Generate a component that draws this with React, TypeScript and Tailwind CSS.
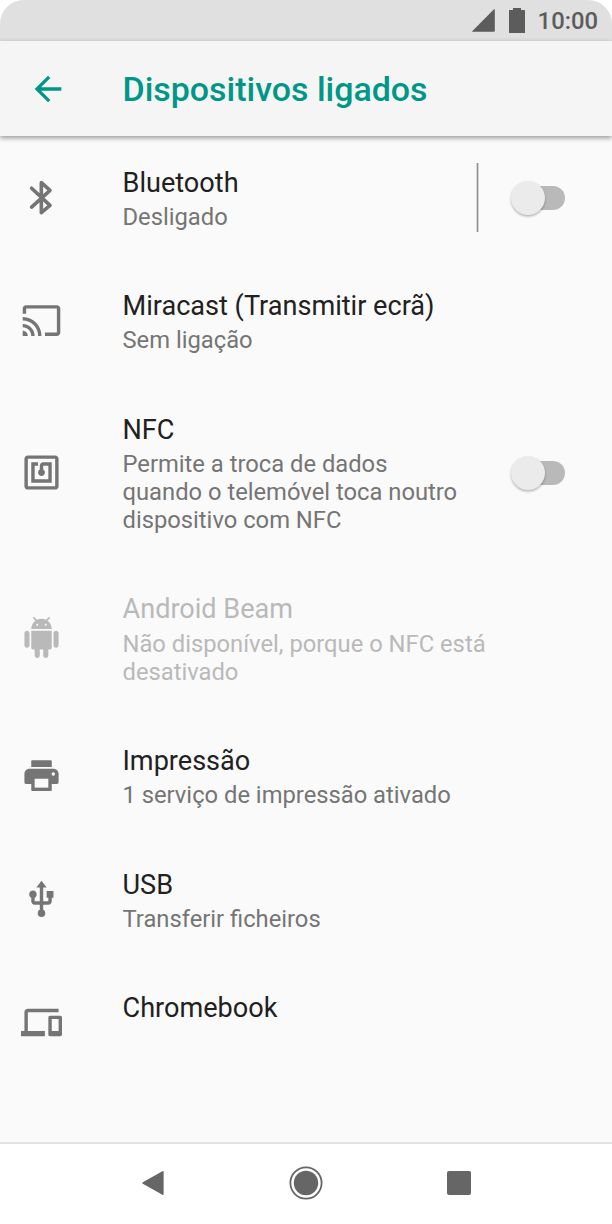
import type { ReactNode } from "react";
import { MdArrowBack, MdCast, MdNfc, MdUsb, MdDevices } from "react-icons/md";

interface RowProps {
  icon: ReactNode;
  title: string;
  summary?: string[];
  toggle?: boolean;
  divider?: boolean;
  disabled?: boolean;
}

function BluetoothIcon() {
  return (
    <svg viewBox="0 0 24 24" className="size-[41px]" fill="none" stroke="currentColor" strokeWidth="2.1" strokeLinecap="round" strokeLinejoin="round">
      <path d="M6.2 6.6 17 16.6 11.9 20.9V3.3L17 7.8 6.2 17.6" />
    </svg>
  );
}

function AndroidIcon() {
  return (
    <svg viewBox="0 0 24 24" className="size-[41px]" fill="currentColor">
      <path d="M6 18c0 .55.45 1 1 1h1v3.5c0 .83.67 1.5 1.5 1.5s1.5-.67 1.5-1.5V19h2v3.5c0 .83.67 1.5 1.5 1.5s1.5-.67 1.5-1.5V19h1c.55 0 1-.45 1-1V8H6v10z" />
      <path d="M3.5 8C2.67 8 2 8.67 2 9.5v7c0 .83.67 1.5 1.5 1.5S5 17.33 5 16.5v-7C5 8.67 4.33 8 3.5 8zm17 0c-.83 0-1.5.67-1.5 1.5v7c0 .83.67 1.5 1.5 1.5s1.5-.67 1.5-1.5v-7c0-.83-.67-1.5-1.5-1.5z" />
      <path d="M15.53 2.16l1.3-1.3c.2-.2.2-.51 0-.71-.2-.2-.51-.2-.71 0l-1.48 1.48C13.85 1.23 12.95 1 12 1c-.96 0-1.86.23-2.66.63L7.85.15c-.2-.2-.51-.2-.71 0-.2.2-.2.51 0 .71l1.31 1.31C6.97 3.26 6 5.01 6 7h12c0-1.99-.97-3.75-2.47-4.84z" />
      <circle cx="9.5" cy="4.5" r="0.6" fill="#fafafa" />
      <circle cx="14.5" cy="4.5" r="0.6" fill="#fafafa" />
    </svg>
  );
}

function PrintIcon() {
  return (
    <svg viewBox="0 0 24 24" className="size-[41px]" fill="currentColor">
      <path d="M6.5 3h11a.5.5 0 0 1 .5.5V7H6V3.5a.5.5 0 0 1 .5-.5z" />
      <path d="M5 8h14c1.66 0 3 1.34 3 3v5c0 .6-.4 1-1 1h-3v3.3c0 .5-.3.7-.7.7H6.7c-.4 0-.7-.2-.7-.7V17H3c-.6 0-1-.4-1-1v-5c0-1.66 1.34-3 3-3z" />
      <path d="M8 13.9h8v5.2H8z" fill="#fafafa" />
      <circle cx="18.9" cy="11.1" r="1" fill="#fafafa" />
    </svg>
  );
}

function Toggle() {
  return (
    <div className="relative mt-[2px] h-[35px] w-[54px]">
      <div className="absolute top-[5px] right-0 h-6 w-11 rounded-full bg-[#b9b9b9]" />
      <div className="absolute top-0 left-0 size-[34px] rounded-full bg-[#ebebeb] shadow-[0_1.5px_2.5px_rgba(0,0,0,0.28)]" />
    </div>
  );
}

function Row({ icon, title, summary = [], toggle, divider, disabled }: RowProps) {
  return (
    <div className={`mb-[54.6px] flex min-h-[69px] items-center ${disabled ? "text-[#b9b9b9]" : "text-[#757575]"}`}>
      <div className="flex w-[82px] shrink-0 justify-center">{icon}</div>
      <div className="ml-[40.5px] grow self-start whitespace-nowrap">
        <h2 className={`text-[27.1px] leading-[41px] ${disabled ? "" : "text-[#212121]"}`}>{title}</h2>
        <div className="-mt-[0.8px] mb-[0.8px]">
          {summary.map((line) => (
            <p key={line} className="text-[23.75px] leading-[28px]">{line}</p>
          ))}
        </div>
      </div>
      {divider && <div className="mr-8 h-[69px] w-[3px] border-x border-[#d8d8d8] bg-[#8e8e8e]" />}
      {toggle && <div className="mr-[47px]"><Toggle /></div>}
    </div>
  );
}

export default function App() {
  return (
    <div className="bg-white">
      <div className="flex h-[1224px] w-[612px] flex-col overflow-hidden rounded-t-[24px] bg-[#fafafa] font-['Roboto',sans-serif]">
        {/* Status bar */}
        <div className="flex h-[41px] shrink-0 items-center justify-end bg-[#e0e0e0] pr-[14px] text-[#5c5c5c]">
          <svg viewBox="0 0 23 23" className="mr-[14px] size-[23px]" fill="currentColor">
            <path d="M22 0.3q.8-.5.8.5v21q0 1-1 1H.8q-1 0-.4-.8z" />
          </svg>
          <svg viewBox="0 0 16 25" className="mr-[13px] h-[25px] w-4" fill="currentColor">
            <path d="M4 0h8v2h3.4q.6 0 .6.6v21.8q0 .6-.6.6H.6q-.6 0-.6-.6V2.6Q0 2 .6 2H4z" />
          </svg>
          <span className="mt-px text-[23.8px] leading-[42px] font-medium">10:00</span>
        </div>

        {/* App bar */}
        <header className="flex h-[95px] shrink-0 items-center bg-[#f5f5f5] text-[#009688] shadow-[0_2px_5px_rgba(0,0,0,0.4)]">
          <MdArrowBack size={40} className="ml-[28px]" />
          <h1 className="mt-[3px] ml-[54.5px] text-[33.95px] leading-[40px] font-medium">Dispositivos ligados</h1>
        </header>

        <main className="min-h-0 grow pt-[26.6px]">
          <Row icon={<BluetoothIcon />} title="Bluetooth" summary={["Desligado"]} toggle divider />
          <Row icon={<MdCast size={41} />} title="Miracast (Transmitir ecrã)" summary={["Sem ligação"]} />
          <Row
            icon={<MdNfc size={41} />}
            title="NFC"
            summary={["Permite a troca de dados", "quando o telemóvel toca noutro", "dispositivo com NFC"]}
            toggle
          />
          <Row icon={<AndroidIcon />} title="Android Beam" summary={["Não disponível, porque o NFC está", "desativado"]} disabled />
          <Row icon={<PrintIcon />} title="Impressão" summary={["1 serviço de impressão ativado"]} />
          <Row icon={<MdUsb size={41} />} title="USB" summary={["Transferir ficheiros"]} />
          <Row icon={<MdDevices size={41} />} title="Chromebook" />
        </main>

        {/* Navigation bar */}
        <nav className="flex h-[82px] shrink-0 items-center justify-center gap-[124px] border-t-2 border-[#e2e2e2] bg-white pb-[2px] text-[#666]">
          <svg viewBox="0 0 24 24" className="h-6 w-6" fill="currentColor">
            <path d="M1.8 11.2 21.4.2q1.2-.6 1.2.6v22.4q0 1.2-1.2.6L1.8 12.8q-1.2-.8 0-1.6z" />
          </svg>
          <svg viewBox="0 0 34 34" className="size-[34px]" fill="currentColor">
            <circle cx="17" cy="17" r="15.6" fill="none" stroke="currentColor" strokeWidth="1.8" />
            <circle cx="17" cy="17" r="12.2" />
          </svg>
          <div className="size-6 rounded-[2px] bg-[#666]" />
        </nav>
      </div>
    </div>
  );
}
